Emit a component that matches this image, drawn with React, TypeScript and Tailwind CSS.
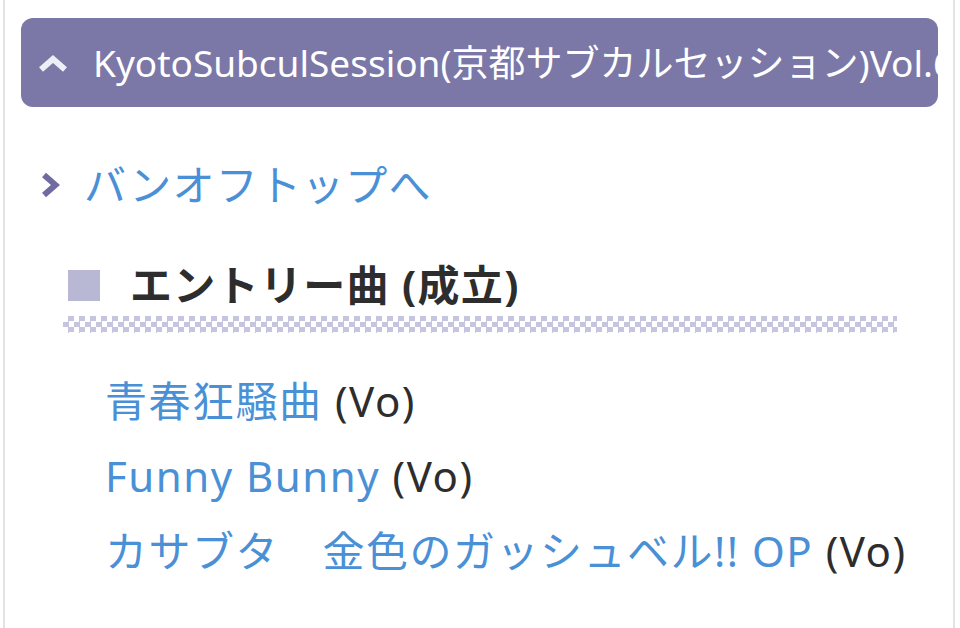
export default function App() {
  const font = { fontFamily: '"Noto Sans", "Noto Sans CJK JP", sans-serif' };
  return (
    <div className="w-[960px] h-[628px] bg-white overflow-hidden" style={font}>
      <div className="ml-[3px] w-[952px] h-full border-x-2 border-[#e3e3e3] pl-4 pr-[15px] pt-[18px]">
        <div className="h-[89px] rounded-[12px] bg-[#7b77a7] flex items-center overflow-hidden whitespace-nowrap">
          <svg className="ml-[17px] shrink-0" width="30" height="18" viewBox="0 0 30 18">
            <path d="M3 15.5 L15 5 L27 15.5" stroke="#eeeef6" strokeWidth="6" fill="none" strokeLinejoin="miter" />
          </svg>
          <span className="ml-[25px] text-white text-[37px] leading-none">KyotoSubculSession(京都サブカルセッション)Vol.6</span>
        </div>

        <div className="mt-[48px] h-[60px] flex items-center pl-[20px]">
          <svg className="shrink-0" width="19" height="26" viewBox="0 0 19 26">
            <path d="M3 3 L14.5 13 L3 23" stroke="#6f6ba1" strokeWidth="6" fill="none" />
          </svg>
          <a className="ml-[24px] text-[#4a90d6] text-[42px] leading-none tracking-[1.2px]">バンオフトップへ</a>
        </div>

        <div className="mt-[51px] flex items-center pl-[47px] h-[38px]">
          <div className="w-[32px] h-[31px] bg-[#b9b8d4] shrink-0" />
          <h2 className="ml-[30px] text-[42px] font-bold text-[#2d2d2d] leading-none whitespace-nowrap tracking-[1.3px]">
            エントリー曲 (成立)
          </h2>
        </div>
        <div className="mt-[12px] ml-[42px] w-[834px] h-[17px] bg-[repeating-conic-gradient(#c6c5df_0%_25%,#ffffff_0%_50%)] bg-[length:11px_11px]" />

        <ul className="mt-[30px] pl-[84px] text-[42px] leading-[75px] whitespace-nowrap tracking-[1.5px]">
          <li>
            <a className="text-[#4a90d6]">青春狂騒曲</a> <span className="text-[#2d2d2d]">(Vo)</span>
          </li>
          <li>
            <a className="text-[#4a90d6]">Funny Bunny</a> <span className="text-[#2d2d2d]">(Vo)</span>
          </li>
          <li>
            <a className="text-[#4a90d6]">カサブタ　金色のガッシュベル!! OP</a> <span className="text-[#2d2d2d]">(Vo)</span>
          </li>
        </ul>
      </div>
    </div>
  );
}
